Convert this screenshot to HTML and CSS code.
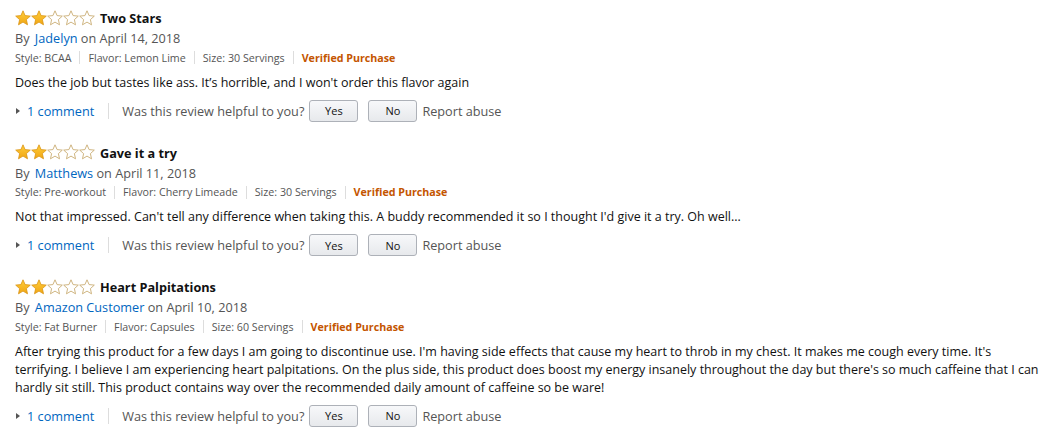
FILE: index.html
```html
<!DOCTYPE html>
<html>
<head>
<meta charset="utf-8">
<link rel="stylesheet" href="styles.css">
</head>
<body>
<div class="reviews">
  <div class="review">
    <div class="title-row">
      <svg class="stars" width="80" height="16" viewBox="0 0 80 16">
        <defs>
          <linearGradient id="g1" x1="0" y1="0" x2="0" y2="1"><stop offset="0" stop-color="#ffce3c"/><stop offset="1" stop-color="#f0a513"/></linearGradient>
          <path id="st" d="M8 0.8 L10.1 5.6 L15.3 6.1 L11.4 9.6 L12.5 14.8 L8 12.1 L3.5 14.8 L4.6 9.6 L0.7 6.1 L5.9 5.6 Z"/>
        </defs>
        <use href="#st" x="0" fill="url(#g1)" stroke="#d99414" stroke-width="0.8"/>
        <use href="#st" x="16" fill="url(#g1)" stroke="#d99414" stroke-width="0.8"/>
        <use href="#st" x="32" fill="#fff" stroke="#c9ad73" stroke-width="0.9"/>
        <use href="#st" x="48" fill="#fff" stroke="#c9ad73" stroke-width="0.9"/>
        <use href="#st" x="64" fill="#fff" stroke="#c9ad73" stroke-width="0.9"/>
      </svg>
      <span class="title">Two Stars</span>
    </div>
    <div class="byline">By <a class="link author">Jadelyn</a> on April 14, 2018</div>
    <div class="meta"><span>Style: BCAA</span><i class="sep"></i><span>Flavor: Lemon Lime</span><i class="sep"></i><span>Size: 30 Servings</span><i class="sep"></i><span class="verified">Verified Purchase</span></div>
    <p class="body">Does the job but tastes like ass. It’s horrible, and I won't order this flavor again</p>
    <div class="actions">
      <span class="caret"></span><a class="link">1 comment</a><i class="vsep"></i><span class="ask">Was this review helpful to you?</span><button class="btn">Yes</button><button class="btn">No</button><span class="report">Report abuse</span>
    </div>
  </div>

  <div class="review">
    <div class="title-row">
      <svg class="stars" width="80" height="16" viewBox="0 0 80 16">
        <use href="#st" x="0" fill="url(#g1)" stroke="#d99414" stroke-width="0.8"/>
        <use href="#st" x="16" fill="url(#g1)" stroke="#d99414" stroke-width="0.8"/>
        <use href="#st" x="32" fill="#fff" stroke="#c9ad73" stroke-width="0.9"/>
        <use href="#st" x="48" fill="#fff" stroke="#c9ad73" stroke-width="0.9"/>
        <use href="#st" x="64" fill="#fff" stroke="#c9ad73" stroke-width="0.9"/>
      </svg>
      <span class="title">Gave it a try</span>
    </div>
    <div class="byline">By <a class="link author">Matthews</a> on April 11, 2018</div>
    <div class="meta"><span>Style: Pre-workout</span><i class="sep"></i><span>Flavor: Cherry Limeade</span><i class="sep"></i><span>Size: 30 Servings</span><i class="sep"></i><span class="verified">Verified Purchase</span></div>
    <p class="body">Not that impressed. Can't tell any difference when taking this. A buddy recommended it so I thought I'd give it a try. Oh well...</p>
    <div class="actions">
      <span class="caret"></span><a class="link">1 comment</a><i class="vsep"></i><span class="ask">Was this review helpful to you?</span><button class="btn">Yes</button><button class="btn">No</button><span class="report">Report abuse</span>
    </div>
  </div>

  <div class="review">
    <div class="title-row">
      <svg class="stars" width="80" height="16" viewBox="0 0 80 16">
        <use href="#st" x="0" fill="url(#g1)" stroke="#d99414" stroke-width="0.8"/>
        <use href="#st" x="16" fill="url(#g1)" stroke="#d99414" stroke-width="0.8"/>
        <use href="#st" x="32" fill="#fff" stroke="#c9ad73" stroke-width="0.9"/>
        <use href="#st" x="48" fill="#fff" stroke="#c9ad73" stroke-width="0.9"/>
        <use href="#st" x="64" fill="#fff" stroke="#c9ad73" stroke-width="0.9"/>
      </svg>
      <span class="title">Heart Palpitations</span>
    </div>
    <div class="byline">By <a class="link author">Amazon Customer</a> on April 10, 2018</div>
    <div class="meta"><span>Style: Fat Burner</span><i class="sep"></i><span>Flavor: Capsules</span><i class="sep"></i><span>Size: 60 Servings</span><i class="sep"></i><span class="verified">Verified Purchase</span></div>
    <p class="body">After trying this product for a few days I am going to discontinue use. I'm having side effects that cause my heart to throb in my chest. It makes me cough every time. It's terrifying. I believe I am experiencing heart palpitations. On the plus side, this product does boost my energy insanely throughout the day but there's so much caffeine that I can hardly sit still. This product contains way over the recommended daily amount of caffeine so be ware!</p>
    <div class="actions">
      <span class="caret"></span><a class="link">1 comment</a><i class="vsep"></i><span class="ask">Was this review helpful to you?</span><button class="btn">Yes</button><button class="btn">No</button><span class="report">Report abuse</span>
    </div>
  </div>
</div>
</body>
</html>
```

FILE: styles.css
```css
html, body {
  margin: 0;
  padding: 0;
  background: #fff;
}
body {
  font-family: "Open Sans", "DejaVu Sans", sans-serif;
  font-size: 12.7px;
  color: #111;
}
.reviews {
  padding: 8px 12px 0 15px;
  display: flex;
  flex-direction: column;
  gap: 21px;
}
.review {
  display: flex;
  flex-direction: column;
}
.title-row {
  display: flex;
  align-items: center;
  height: 20px;
}
.stars {
  display: block;
  margin-right: 5px;
  margin-top: -1px;
}
.title {
  font-weight: 700;
  color: #111;
}
.byline {
  color: #555;
  line-height: 19px;
  margin-top: 1px;
}
.link {
  color: #0066c0;
  text-decoration: none;
}
.author {
  margin: 0 0 0 2px;
}
.meta {
  display: flex;
  align-items: center;
  font-size: 10.7px;
  color: #555;
  height: 19px;
}
.sep {
  display: inline-block;
  width: 1px;
  height: 13px;
  background: #ddd;
  margin: 0 8px;
}
.verified {
  color: #c45500;
  font-weight: 700;
}
.body {
  margin: 6.5px 0 0;
  font-size: 12.5px;
  line-height: 18px;
  color: #111;
}
.actions {
  display: flex;
  align-items: center;
  height: 22px;
  margin-top: 8px;
  color: #555;
}
.caret {
  width: 0;
  height: 0;
  border-top: 3.5px solid transparent;
  border-bottom: 3.5px solid transparent;
  border-left: 4px solid #555;
  margin: 0 7px 0 1px;
}
.vsep {
  display: inline-block;
  width: 1px;
  height: 16px;
  background: #ddd;
  margin: 0 13px 0 14px;
}
.btn {
  font-family: "Open Sans", "DejaVu Sans", sans-serif;
  font-size: 11px;
  color: #111;
  width: 49px;
  height: 22px;
  padding: 0;
  border: 1px solid #adb1b8;
  border-radius: 3px;
  background: linear-gradient(#f7f8fa, #e7e9ec);
  margin: 0 5px;
}
.report {
  color: #555;
}
```
